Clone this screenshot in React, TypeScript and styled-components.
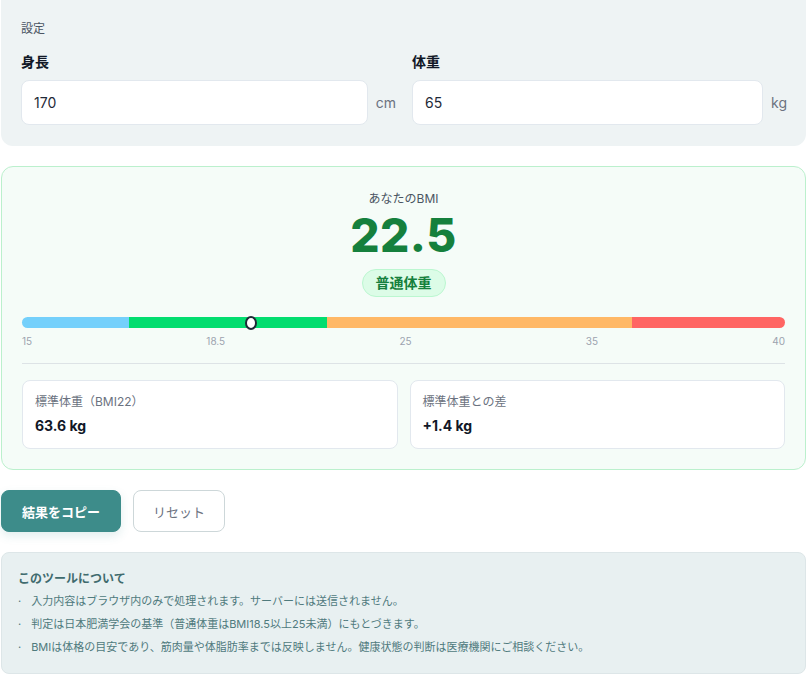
import React from "react";
import styled, { createGlobalStyle } from "styled-components";

const Global = createGlobalStyle`
  body {
    margin: 0;
    background: #ffffff;
    font-family: Inter, "Noto Sans CJK JP", sans-serif;
    color: #1f2937;
  }
`;

const Page = styled.div`
  width: 807px;
  padding: 0 1px;
  box-sizing: border-box;
  display: flex;
  flex-direction: column;
`;

const Settings = styled.section`
  background: #eef3f4;
  border-radius: 0 0 12px 12px;
  padding: 19px 19px 20px 20px;
  height: 146px;
  box-sizing: border-box;
`;

const Caption = styled.div`
  font-size: 12px;
  color: #4b5563;
`;

const Fields = styled.div`
  display: grid;
  grid-template-columns: 1fr 1fr;
  gap: 16px;
  margin-top: 15px;
`;

const Field = styled.div`
  display: flex;
  flex-direction: column;
  gap: 9px;
`;

const Label = styled.label`
  font-size: 14px;
  font-weight: 700;
  color: #111827;
`;

const InputRow = styled.div`
  display: flex;
  align-items: center;
  gap: 8px;
`;

const Input = styled.input`
  flex: 1;
  min-width: 0;
  height: 45px;
  box-sizing: border-box;
  border: 1px solid #e2e8ee;
  border-radius: 8px;
  background: #fff;
  padding: 0 12px;
  font-family: inherit;
  font-size: 14px;
  color: #1f2937;
  outline: none;
`;

const Unit = styled.span`
  font-size: 14px;
  color: #6b7280;
`;

const Result = styled.section`
  margin-top: 20px;
  border: 1px solid #bbf0cd;
  border-radius: 12px;
  background: #f5fcf8;
  padding: 24px 20px 20px;
  display: flex;
  flex-direction: column;
  align-items: center;
`;

const Small = styled.div`
  font-size: 12px;
  color: #4b5563;
  line-height: 16px;
`;

const Value = styled.div`
  font-size: 46px;
  font-weight: 800;
  color: #15803d;
  line-height: 56px;
  letter-spacing: 0.5px;
`;

const Badge = styled.span`
  margin-top: 6px;
  padding: 4px 13px;
  line-height: 18px;
  border-radius: 999px;
  background: #dcfce7;
  border: 1px solid #bbf7d0;
  color: #15803d;
  font-size: 14px;
  font-weight: 700;
`;

const Scale = styled.div`
  width: 100%;
  margin-top: 20px;
`;

const Bar = styled.div`
  position: relative;
  height: 11px;
  border-radius: 6px;
  display: flex;
`;

const Seg = styled.div<{ $c: string; $w: number; $first?: boolean; $last?: boolean }>`
  background: ${(p) => p.$c};
  flex: ${(p) => p.$w};
  border-radius: ${(p) => (p.$first ? "6px 0 0 6px" : p.$last ? "0 6px 6px 0" : "0")};
`;

const Marker = styled.div`
  position: absolute;
  top: -1px;
  width: 8px;
  height: 10px;
  border: 2px solid #1f2937;
  border-radius: 50%;
  background: #fff;
  transform: translateX(-6px);
`;

const Ticks = styled.div`
  display: flex;
  justify-content: space-between;
  margin-top: 7px;
  font-size: 10px;
  line-height: 12px;
  color: #9ca3af;
`;

const Divider = styled.hr`
  width: 100%;
  border: 0;
  border-top: 1px solid #dde3e6;
  margin: 16px 0 16px;
`;

const Stats = styled.div`
  width: 100%;
  display: grid;
  grid-template-columns: 1fr 1fr;
  gap: 12px;
`;

const Stat = styled.div`
  background: #fff;
  border: 1px solid #e2e8ee;
  border-radius: 8px;
  padding: 13px 12px 12px;
`;

const StatLabel = styled.div`
  font-size: 12px;
  line-height: 16px;
  color: #6b7280;
`;

const StatValue = styled.div`
  margin-top: 6px;
  font-size: 14px;
  line-height: 20px;
  font-weight: 700;
  color: #111827;
`;

const Actions = styled.div`
  display: flex;
  gap: 12px;
  margin-top: 20px;
`;

const Button = styled.button<{ $primary?: boolean }>`
  height: 42px;
  padding: 0 ${(p) => (p.$primary ? "20px" : "19px")};
  border-radius: 8px;
  font-family: inherit;
  font-size: 13px;
  font-weight: ${(p) => (p.$primary ? 700 : 400)};
  background: ${(p) => (p.$primary ? "#3d8c8a" : "#fff")};
  color: ${(p) => (p.$primary ? "#fff" : "#6b7280")};
  border: 1px solid ${(p) => (p.$primary ? "#3d8c8a" : "#cdd7d9")};
  box-shadow: ${(p) => (p.$primary ? "0 4px 10px rgba(61,140,138,0.15)" : "none")};
`;

const Info = styled.section`
  margin-top: 20px;
  background: #e8f0f1;
  border: 1px solid #dde6e8;
  border-radius: 8px;
  padding: 16px 16px 14px;
`;

const InfoTitle = styled.div`
  font-size: 12px;
  font-weight: 700;
  color: #3f6b6e;
  margin-bottom: 4px;
`;

const Item = styled.div`
  font-size: 11px;
  color: #4f7a7d;
  line-height: 23px;
  display: flex;
  gap: 10px;
  &::before {
    content: "·";
  }
`;

export default function App() {
  const bmi = 22.5;
  const pos = ((bmi - 15) / 25) * 100;
  return (
    <Page>
      <Global />
      <Settings>
        <Caption>設定</Caption>
        <Fields>
          <Field>
            <Label>身長</Label>
            <InputRow>
              <Input defaultValue="170" />
              <Unit>cm</Unit>
            </InputRow>
          </Field>
          <Field>
            <Label>体重</Label>
            <InputRow>
              <Input defaultValue="65" />
              <Unit>kg</Unit>
            </InputRow>
          </Field>
        </Fields>
      </Settings>

      <Result>
        <Small>あなたのBMI</Small>
        <Value>22.5</Value>
        <Badge>普通体重</Badge>
        <Scale>
          <Bar>
            <Seg $c="#74d0fb" $w={3.5} $first />
            <Seg $c="#02dd6f" $w={6.5} />
            <Seg $c="#ffb866" $w={10} />
            <Seg $c="#ff6563" $w={5} $last />
            <Marker style={{ left: `${pos}%` }} />
          </Bar>
          <Ticks>
            <span>15</span>
            <span>18.5</span>
            <span>25</span>
            <span>35</span>
            <span>40</span>
          </Ticks>
        </Scale>
        <Divider />
        <Stats>
          <Stat>
            <StatLabel>標準体重（BMI22）</StatLabel>
            <StatValue>63.6 kg</StatValue>
          </Stat>
          <Stat>
            <StatLabel>標準体重との差</StatLabel>
            <StatValue>+1.4 kg</StatValue>
          </Stat>
        </Stats>
      </Result>

      <Actions>
        <Button $primary>結果をコピー</Button>
        <Button>リセット</Button>
      </Actions>

      <Info>
        <InfoTitle>このツールについて</InfoTitle>
        <Item>入力内容はブラウザ内のみで処理されます。サーバーには送信されません。</Item>
        <Item>判定は日本肥満学会の基準（普通体重はBMI18.5以上25未満）にもとづきます。</Item>
        <Item>BMIは体格の目安であり、筋肉量や体脂肪率までは反映しません。健康状態の判断は医療機関にご相談ください。</Item>
      </Info>
    </Page>
  );
}
